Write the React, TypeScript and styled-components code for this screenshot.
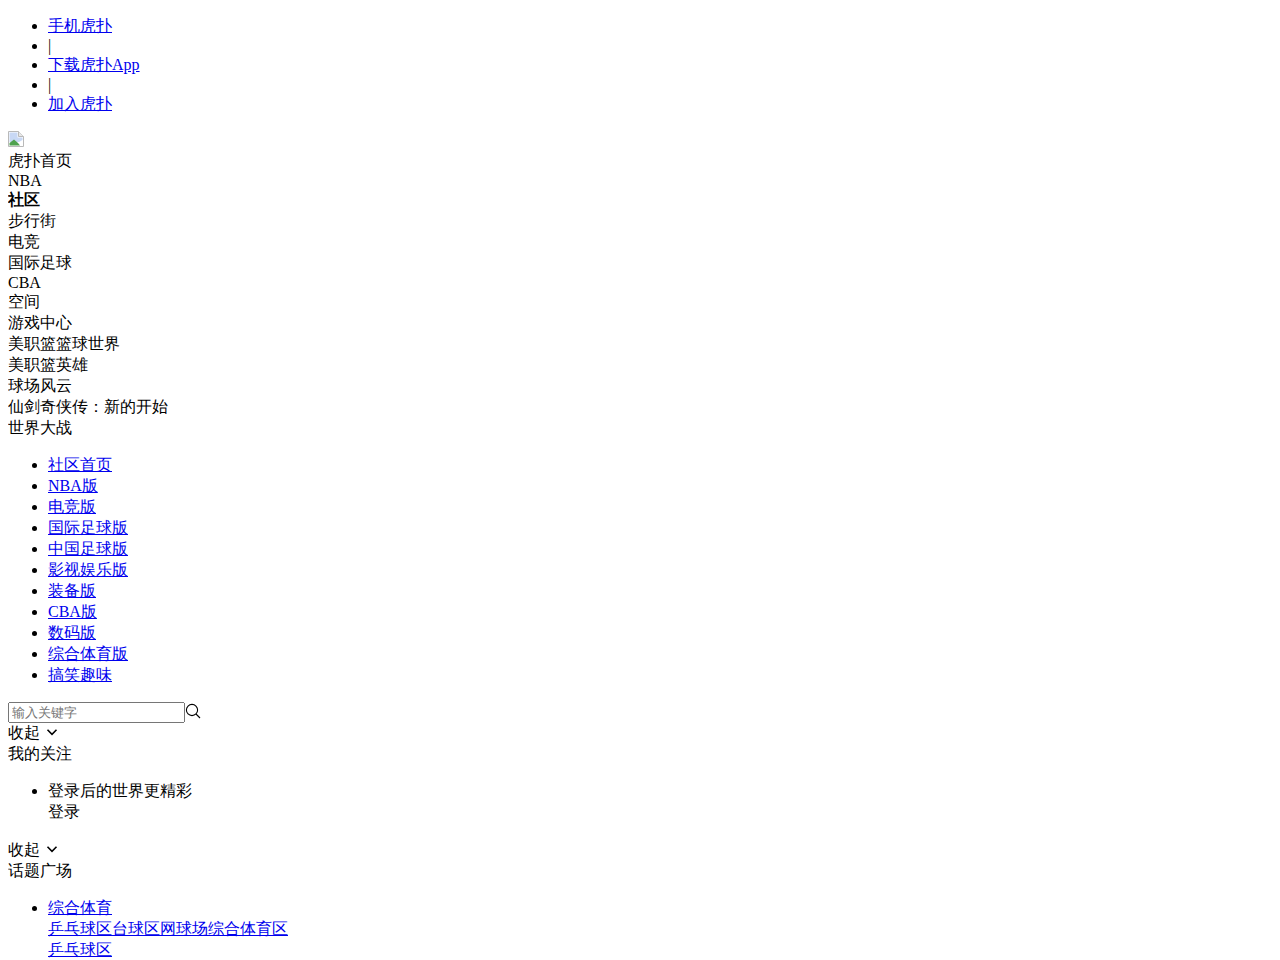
import React from "react";
import styled, { createGlobalStyle } from "styled-components";

const Global = createGlobalStyle`
  body {
    margin: 0 8px 8px;
    color: #000;
    font-family: "Liberation Serif", serif;
    font-size: 16px;
  }
`;

const BulletList = styled.ul`
  margin: 16px 0;
  padding-left: 40px;
  list-style: disc;
`;

const TextLink = styled.a`
  color: #0000ee;
  text-decoration: underline;
`;

const LogoFrame = styled.div`
  display: block;
`;

const MainNav = styled.nav`
  display: block;
`;

const NavItem = styled.div<{ $active?: boolean }>`
  font-weight: ${(p) => (p.$active ? 700 : 400)};
`;

const SearchBar = styled.div`
  display: block;
`;

const SearchInput = styled.input`
  width: 177px;
  box-sizing: border-box;
  font-size: 13.333px;
`;

const BrokenSvg = styled.svg`
  display: inline-block;
  vertical-align: baseline;
`;

const IconSvg = styled.svg`
  display: inline-block;
  vertical-align: -2px;
`;

const Row = styled.div`
  display: block;
`;

const LoginAction = styled.div`
  padding-bottom: 1px;
`;

const Chevron = () => (
  <IconSvg width="16" height="16" viewBox="0 0 16 16" fill="none">
    <path d="M3.5 5.8 L8 10.3 L12.5 5.8" stroke="#000" strokeWidth="1.6" />
  </IconSvg>
);

const BrokenImage = () => (
  <BrokenSvg width="16" height="16" viewBox="0 0 16 16">
    <path d="M0.5 0.5 H10.5 L15.5 5.5 V15.5 H0.5 Z" fill="#fff" stroke="#b9b9b9" />
    <path d="M10.5 0.5 V5.5 H15.5" fill="#e8e8e8" stroke="#b9b9b9" />
    <path d="M1.5 1.5 H9.5 V6.5 H14.5 V9 L11 11 H1.5 Z" fill="#c8d8f5" />
    <path d="M1.5 14.5 V12 L6 8.5 L10 12 L12 14.5 Z" fill="#4fa24f" />
  </BrokenSvg>
);

const SearchIcon = () => (
  <IconSvg width="16" height="16" viewBox="0 0 16 16" fill="none">
    <circle cx="7" cy="7" r="5.6" stroke="#000" strokeWidth="1.1" />
    <path d="M11 11 L15 15" stroke="#000" strokeWidth="1.1" />
  </IconSvg>
);

const topLinks = ["手机虎扑", "|", "下载虎扑App", "|", "加入虎扑"];
const mainNav = ["虎扑首页", "NBA", "社区", "步行街", "电竞", "国际足球", "CBA", "空间", "游戏中心", "美职篮篮球世界", "美职篮英雄", "球场风云", "仙剑奇侠传：新的开始", "世界大战"];
const boards = ["社区首页", "NBA版", "电竞版", "国际足球版", "中国足球版", "影视娱乐版", "装备版", "CBA版", "数码版", "综合体育版", "搞笑趣味"];

export default function App() {
  return (
    <>
      <Global />
      <BulletList>
        {topLinks.map((t, i) => (
          <li key={i}>{t === "|" ? t : <TextLink href="#">{t}</TextLink>}</li>
        ))}
      </BulletList>
      <LogoFrame>
        <BrokenImage />
      </LogoFrame>
      <MainNav>
        {mainNav.map((t) => (
          <NavItem key={t} $active={t === "社区"}>{t}</NavItem>
        ))}
      </MainNav>
      <BulletList>
        {boards.map((t) => (
          <li key={t}><TextLink href="#">{t}</TextLink></li>
        ))}
      </BulletList>
      <SearchBar>
        <SearchInput placeholder="输入关键字" />
        <SearchIcon />
      </SearchBar>
      <Row>收起 <Chevron /></Row>
      <Row>我的关注</Row>
      <BulletList>
        <li>
          <Row>登录后的世界更精彩</Row>
          <LoginAction>登录</LoginAction>
        </li>
      </BulletList>
      <Row>收起 <Chevron /></Row>
      <Row>话题广场</Row>
      <BulletList>
        <li>
          <Row><TextLink href="#">综合体育</TextLink></Row>
          <Row>
            <TextLink href="#">乒乓球区</TextLink>
            <TextLink href="#">台球区</TextLink>
            <TextLink href="#">网球场</TextLink>
            <TextLink href="#">综合体育区</TextLink>
          </Row>
          <Row><TextLink href="#">乒乓球区</TextLink></Row>
        </li>
      </BulletList>
    </>
  );
}
